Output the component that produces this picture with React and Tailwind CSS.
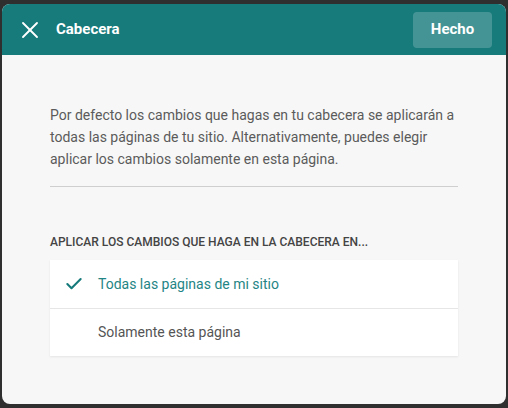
import { X, Check } from "lucide-react";

const options = ["Todas las páginas de mi sitio", "Solamente esta página"];

export default function App() {
  const selected = 0;

  return (
    <div className="w-[508px] h-[408px] bg-[#2f2f2f] px-[2px] py-[4px] font-['Roboto',sans-serif]">
      <div className="h-full rounded-lg overflow-hidden bg-[#f7f7f7] flex flex-col">
        <div className="h-[51px] shrink-0 bg-[#177a7b] flex items-center pl-[14px] pr-[14px]">
          <button className="text-white">
            <X className="h-[28px] w-[28px]" strokeWidth={1.6} />
          </button>
          <h1 className="ml-[12px] text-[15px] font-bold text-white">Cabecera</h1>
          <button className="ml-auto h-[36px] w-[79px] rounded bg-white/20 text-[15px] font-bold text-white">
            Hecho
          </button>
        </div>

        <div className="px-[48px] pt-[49px]">
          <p className="text-[14px] leading-[22px] text-[#5b5b5b]">
            Por defecto los cambios que hagas en tu cabecera se aplicarán a
            todas las páginas de tu sitio. Alternativamente, puedes elegir
            aplicar los cambios solamente en esta página.
          </p>
          <hr className="mt-[16px] border-t border-[#cfcfcf]" />

          <h2 className="mt-[46px] text-[12px] leading-[18px] font-medium uppercase text-[#444]">
            Aplicar los cambios que haga en la cabecera en...
          </h2>

          <ul className="mt-[9px] bg-white shadow-[0_1px_2px_rgba(0,0,0,0.08)]">
            {options.map((label, i) => (
              <li
                key={label}
                className={`h-[48px] flex items-center ${
                  i > 0 ? "border-t border-[#e6e6e6]" : ""
                }`}
              >
                <span className="w-[48px] flex justify-center">
                  {i === selected && (
                    <Check className="h-[20px] w-[20px] text-[#177a7b]" strokeWidth={2.5} />
                  )}
                </span>
                <span
                  className={`text-[14px] ${
                    i === selected ? "text-[#1f8585]" : "text-[#555]"
                  }`}
                >
                  {label}
                </span>
              </li>
            ))}
          </ul>
        </div>
      </div>
    </div>
  );
}
